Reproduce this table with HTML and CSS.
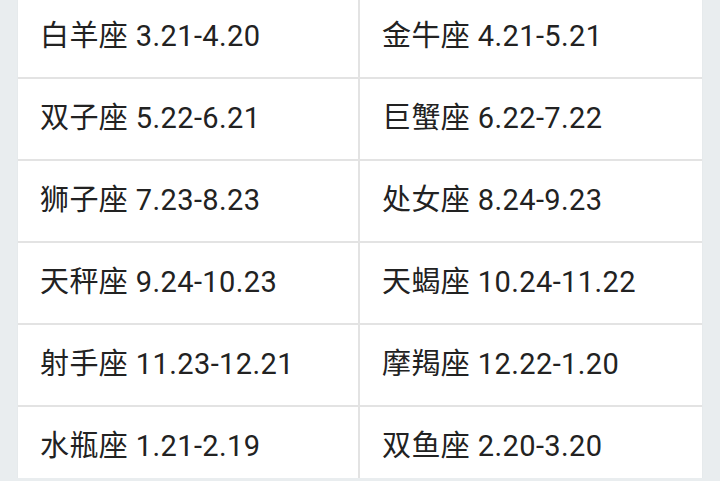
FILE: index.html
```html
<!DOCTYPE html>
<html lang="zh">
<head>
<meta charset="utf-8">
<link rel="stylesheet" href="styles.css">
</head>
<body>
<div class="page">
  <div class="table">
    <div class="cell">白羊座 3.21-4.20</div>
    <div class="cell">金牛座 4.21-5.21</div>
    <div class="cell">双子座 5.22-6.21</div>
    <div class="cell">巨蟹座 6.22-7.22</div>
    <div class="cell">狮子座 7.23-8.23</div>
    <div class="cell">处女座 8.24-9.23</div>
    <div class="cell">天秤座 9.24-10.23</div>
    <div class="cell">天蝎座 10.24-11.22</div>
    <div class="cell">射手座 11.23-12.21</div>
    <div class="cell">摩羯座 12.22-1.20</div>
    <div class="cell">水瓶座 1.21-2.19</div>
    <div class="cell">双鱼座 2.20-3.20</div>
  </div>
</div>
</body>
</html>
```
FILE: styles.css
```css
html, body {
  margin: 0;
  padding: 0;
  background: #e9edef;
  overflow: hidden;
}
.page {
  padding: 0 18px;
  height: 481px;
}
.table {
  margin-top: -3px;
  background: #fff;
  display: grid;
  grid-template-columns: 1fr 1fr;
  box-shadow: 0 0 1px rgba(0,0,0,0.08);
}
.cell {
  height: 80px;
  box-sizing: border-box;
  padding-bottom: 8px;
  border-bottom: 2px solid #e3e3e3;
  display: flex;
  align-items: center;
  padding-left: 22px;
  font-family: Roboto, "Noto Sans CJK SC", sans-serif;
  font-size: 29px;
  letter-spacing: 0.4px;
  color: #222;
  white-space: nowrap;
}
.table .cell {
  height: 82px;
}
.cell:nth-child(odd) {
  border-right: 2px solid #e3e3e3;
}
```
